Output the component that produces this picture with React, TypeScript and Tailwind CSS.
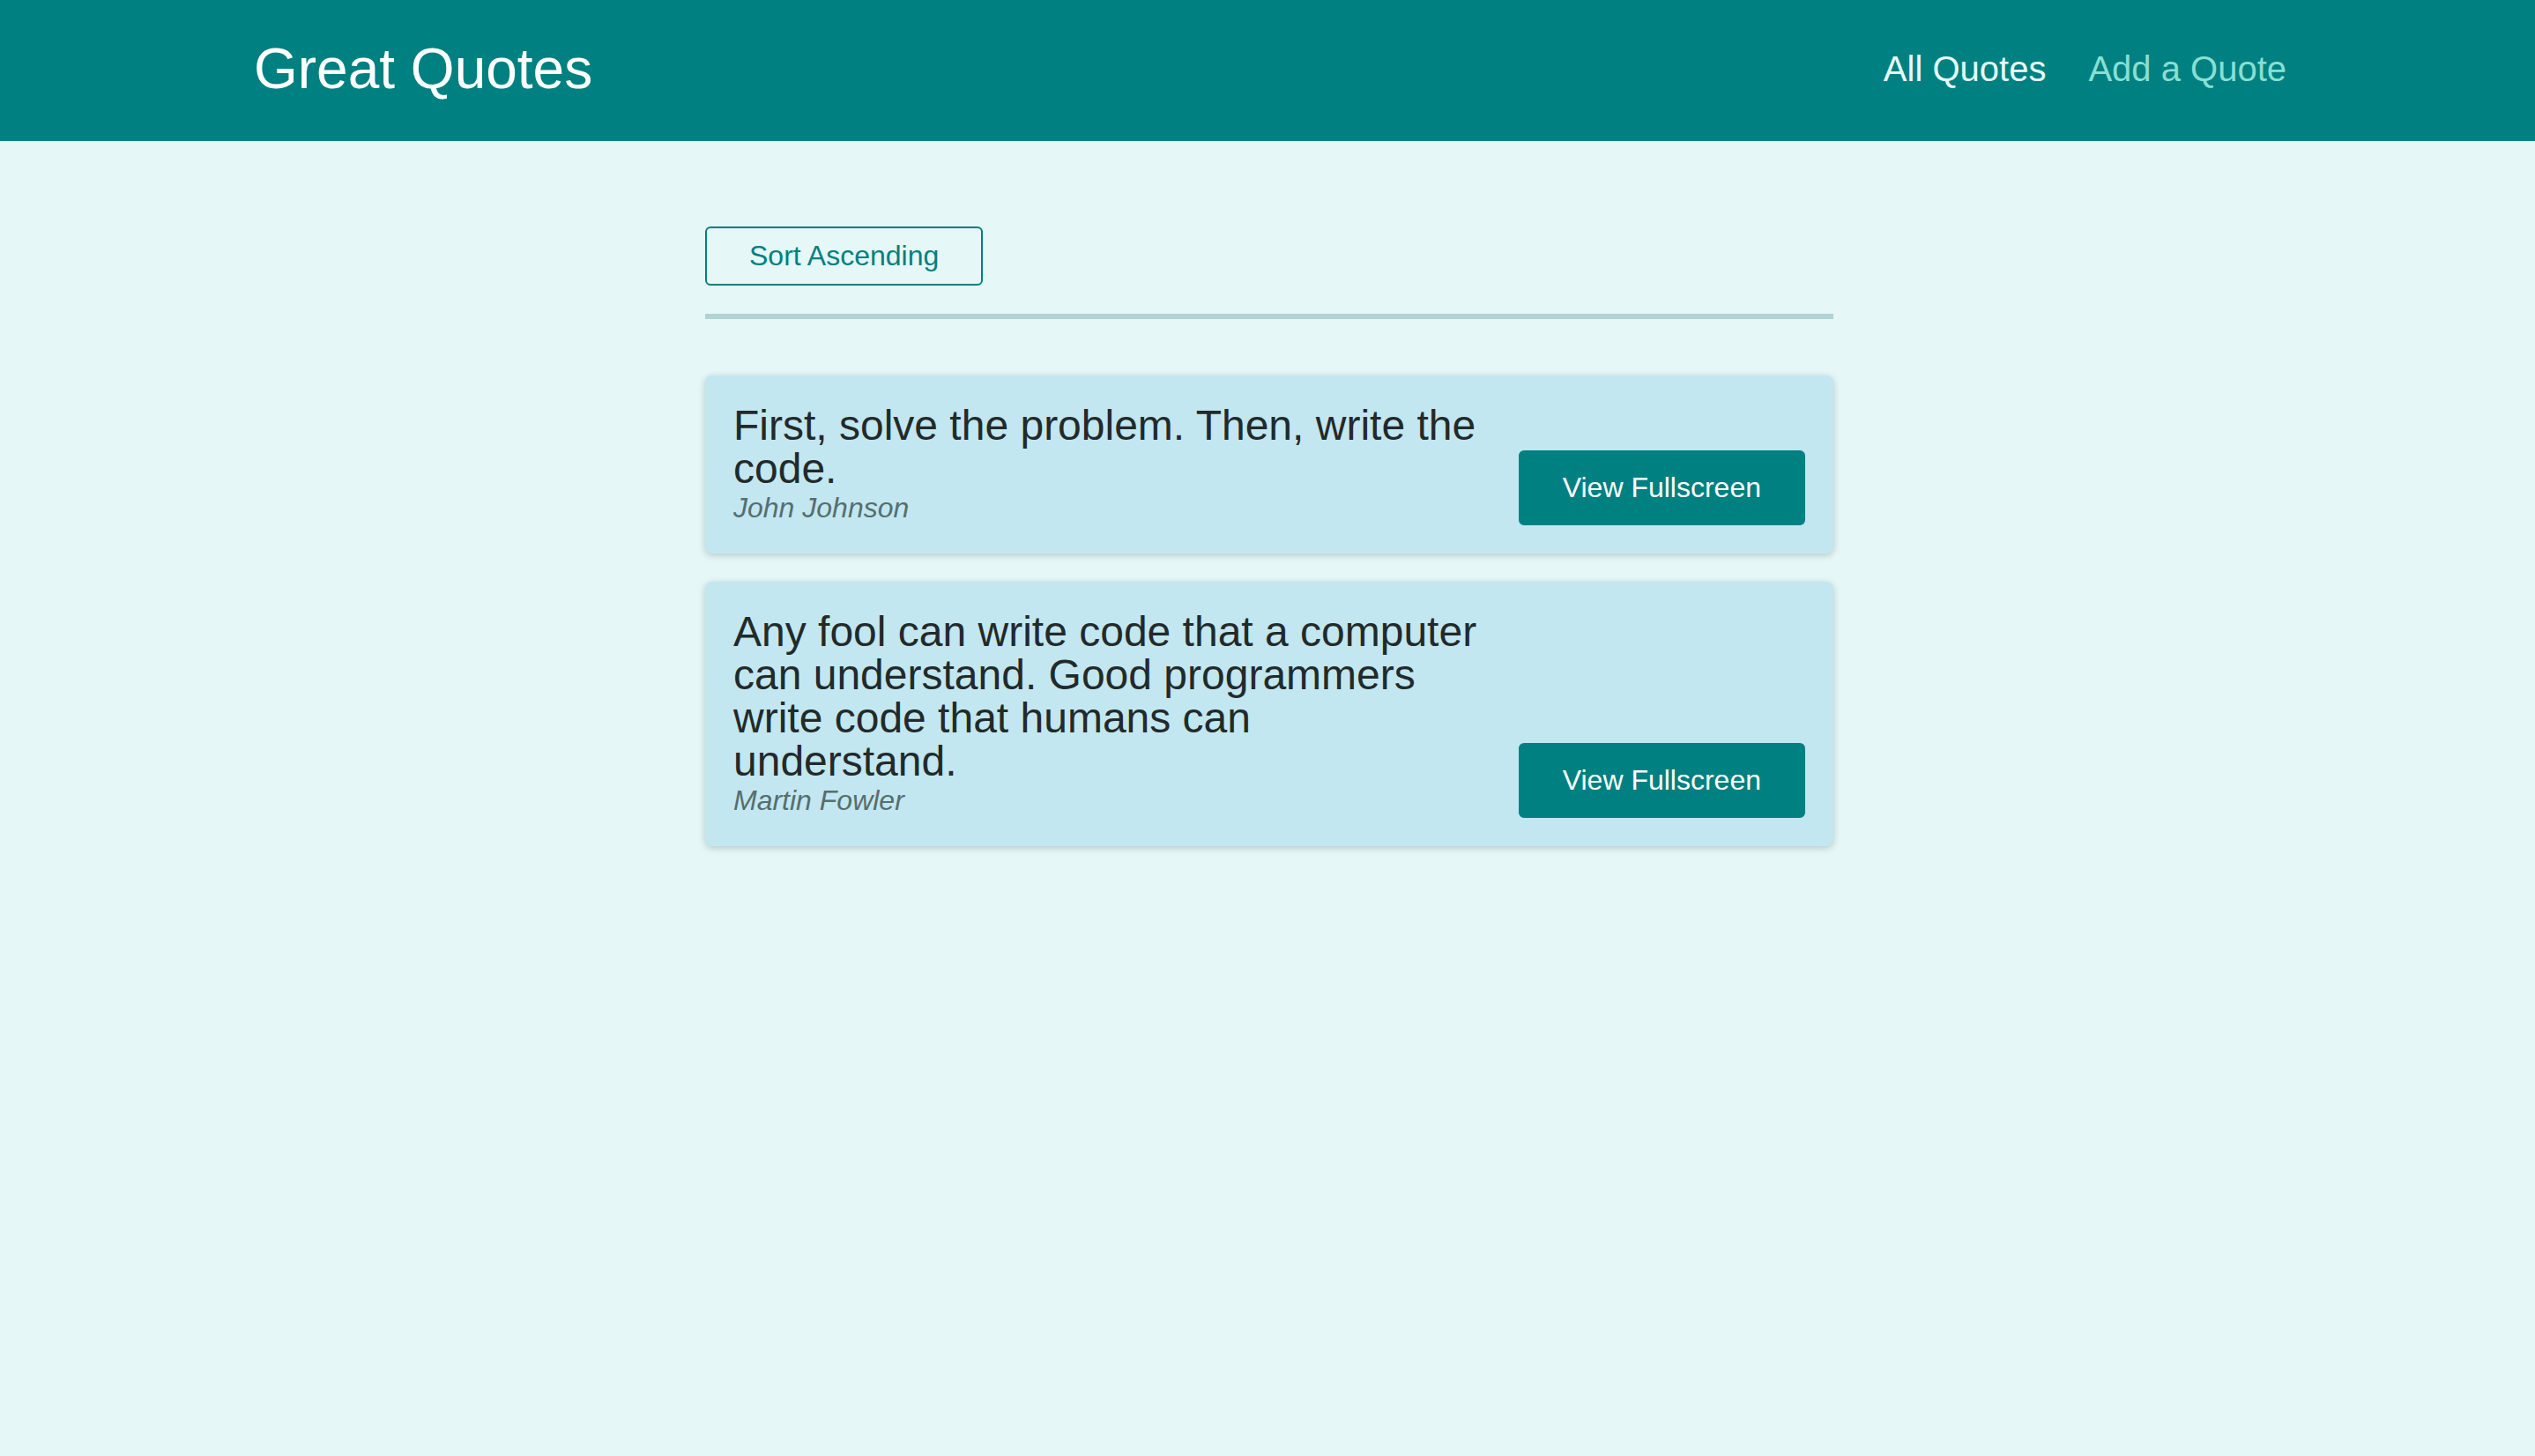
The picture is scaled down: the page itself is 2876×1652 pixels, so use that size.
const quotes = [
  { id: 'q1', author: 'John Johnson', text: 'First, solve the problem. Then, write the code.' },
  { id: 'q2', author: 'Martin Fowler', text: 'Any fool can write code that a computer can understand. Good programmers write code that humans can understand.' },
];

const QuoteItem = ({ text, author }: { text: string; author: string }) => {
  return (
    <li className="flex items-end justify-between p-[32px] bg-[#c2e7f0] rounded-[8px] shadow-[0_2px_8px_rgba(0,0,0,0.2)]">
      <figure className="w-[846px]">
        <blockquote className="text-[48px] leading-[49px] text-[#222a2a]">{text}</blockquote>
        <figcaption className="text-[32px] leading-[40px] italic text-[#566e6e]">{author}</figcaption>
      </figure>
      <button className="px-[48px] py-[22px] text-[32px] leading-[37px] text-white bg-[#008080] border-2 border-[#008080] rounded-[6px]">
        View Fullscreen
      </button>
    </li>
  );
};

export default function App() {
  return (
    <div className="min-h-screen bg-[#e5f7f7]" style={{ fontFamily: '"Liberation Sans", Arial, sans-serif' }}>
      {/* Header */}
      <header className="h-[160px] flex items-center justify-between bg-[#008080] pl-[288px] pr-[282px] pb-[4px]">
        <div className="text-[64px] text-white">Great Quotes</div>
        <nav>
          <ul className="flex">
            <li className="ml-[48px] text-[40px]">
              <a className="text-[#e6fcfc]">All Quotes</a>
            </li>
            <li className="ml-[48px] text-[40px]">
              <a className="text-[#88dfd3]">Add a Quote</a>
            </li>
          </ul>
        </nav>
      </header>

      <div className="pl-[4px]">
        <main className="w-[1280px] mx-auto pt-[97px]">
          {/* Sorting */}
          <div className="pb-[32px] border-b-[6px] border-[#b0d4d4]">
            <button className="px-[48px] py-[13px] text-[32px] leading-[37px] text-[#008080] border-2 border-[#008080] rounded-[6px]">
              Sort Ascending
            </button>
          </div>

          <ul className="mt-[64px] flex flex-col gap-[32px]">
            {quotes.map((q) => (
              <QuoteItem key={q.id} text={q.text} author={q.author} />
            ))}
          </ul>
        </main>
      </div>
    </div>
  );
}
